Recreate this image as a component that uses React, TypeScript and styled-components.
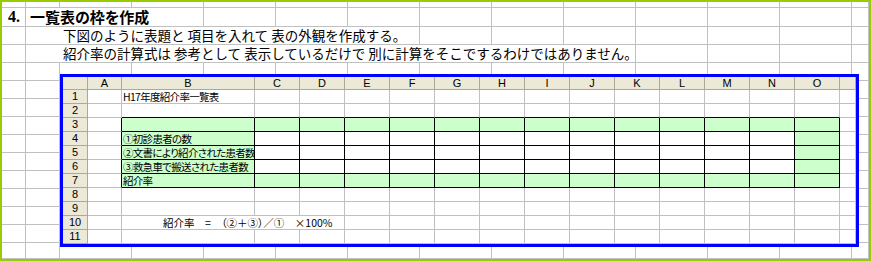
import styled, { createGlobalStyle } from 'styled-components'

const GRID = '#c0c0c0'
const JP = `"Noto Sans CJK JP", "Liberation Sans", sans-serif`

const GlobalStyle = createGlobalStyle`
  body {
    margin: 0;
    background: #fff;
  }
`

// outer worksheet (the page itself)
const Sheet = styled.div`
  position: relative;
  width: 871px;
  height: 261px;
  box-sizing: border-box;
  border: 2px solid #99cc00;
  display: grid;
  grid-template-columns: 24px 34px repeat(11, 72px) 17px;
  grid-template-rows: 6px 19px repeat(12, 18px) 16px;
  background: #fff;
  font-family: ${JP};
  color: #000;
  overflow: hidden;
`

const Cell = styled.div<{ $span?: number }>`
  grid-column: span ${p => p.$span ?? 1};
  box-sizing: border-box;
  border-right: 1px solid ${GRID};
  border-bottom: 1px solid ${GRID};
  display: flex;
  align-items: flex-end;
  white-space: nowrap;
  min-width: 0;
`

const Number = styled.span`
  font-family: "Liberation Serif", serif;
  font-weight: 700;
  font-size: 16px;
  line-height: 18px;
  padding-left: 6px;
`

const Heading = styled.span`
  font-weight: 700;
  font-size: 15px;
  line-height: 18px;
  padding-left: 4px;
  font-feature-settings: "palt";
`

const Note = styled.span`
  font-size: 13.5px;
  line-height: 17px;
  padding-left: 37px;
`

// pasted screenshot of the worksheet lying over the grid
const Picture = styled.div`
  position: absolute;
  left: 58px;
  top: 72px;
  width: 799px;
  height: 173px;
  box-sizing: border-box;
  border: 3px solid #0000ff;
  background: #fff;
  display: grid;
  grid-template-columns: 25px 34px 133px repeat(13, 45px) 16px;
  grid-template-rows: 13px repeat(11, 14px);
`

const Head = styled.div`
  box-sizing: border-box;
  background: #ece9d8;
  border-right: 1px solid #aca899;
  border-bottom: 1px solid #aca899;
  font-family: "Liberation Sans", sans-serif;
  font-size: 11px;
  line-height: 13px;
  display: flex;
  align-items: center;
  justify-content: center;
`

const XCell = styled.div<{
  $span?: number
  $fill?: boolean
  $box?: boolean
  $bb?: boolean
  $br?: boolean
  $indent?: number
  $spacing?: number
}>`
  grid-column: span ${p => p.$span ?? 1};
  box-sizing: border-box;
  background: ${p => (p.$fill ? '#ccffcc' : '#fff')};
  border-right: 1px solid ${p => (p.$box || p.$br ? '#000' : GRID)};
  border-bottom: 1px solid ${p => (p.$box || p.$bb ? '#000' : GRID)};
  padding-left: ${p => p.$indent ?? 1}px;
  font-size: 10.5px;
  line-height: 13px;
  letter-spacing: ${p => p.$spacing ?? -0.7}px;
  font-feature-settings: "palt";
  white-space: nowrap;
  overflow: hidden;
  display: flex;
  align-items: flex-end;
  min-width: 0;
`

const COLS = 'ABCDEFGHIJKLMNO'.split('')

const notes = [
  { span: 6, text: '下図のように表題と 項目を入れて 表の外観を作成する。' },
  { span: 9, text: '紹介率の計算式は 参考として 表示しているだけで 別に計算をそこでするわけではありません。' },
]

const labels: Record<number, string> = {
  1: 'H17年度紹介率一覧表',
  4: '①初診患者の数',
  5: '②文書により紹介された患者数',
  6: '③救急車で搬送された患者数',
  7: '紹介率',
}

const blanks = (n: number, key: string) =>
  Array.from({ length: n }, (_, i) => <Cell key={`${key}-${i}`} />)

const InnerRow = ({ row }: { row: number }) => {
  const boxed = row >= 3 && row <= 7
  if (row === 10) {
    return (
      <>
        <Head>{row}</Head>
        <XCell />
        <XCell $span={3} $indent={41} $spacing={0}>紹介率　=　（②＋③）／①　×100%</XCell>
        {Array.from({ length: 11 }, (_, i) => <XCell key={i} />)}
        <XCell />
      </>
    )
  }
  return (
    <>
      <Head>{row}</Head>
      <XCell $br={boxed} />
      {Array.from({ length: 14 }, (_, i) => {
        const edge = i === 0 || i === 13
        const fill = boxed && (row === 3 || row === 7 || edge)
        return (
          <XCell key={i} $fill={fill} $box={boxed} $bb={row === 2}>
            {i === 0 ? labels[row] : null}
          </XCell>
        )
      })}
      <XCell />
    </>
  )
}

const App = () => {
  return (
    <>
      <GlobalStyle />
      <Sheet>
        {blanks(14, 'top')}

        <Cell><Number>4.</Number></Cell>
        <Cell $span={3}><Heading>一覧表の枠を作成</Heading></Cell>
        {blanks(10, 'r1')}

        {notes.map((n, i) => (
          <div key={i} style={{ display: 'contents' }}>
            <Cell />
            <Cell $span={n.span}><Note>{n.text}</Note></Cell>
            {blanks(14 - 1 - n.span, `n${i}`)}
          </div>
        ))}

        {Array.from({ length: 11 }, (_, r) => blanks(14, `b${r}`))}

        <Picture>
          <Head />
          {COLS.map(c => <Head key={c}>{c}</Head>)}
          <Head />
          {Array.from({ length: 11 }, (_, r) => <InnerRow key={r} row={r + 1} />)}
        </Picture>
      </Sheet>
    </>
  )
}

export default App
